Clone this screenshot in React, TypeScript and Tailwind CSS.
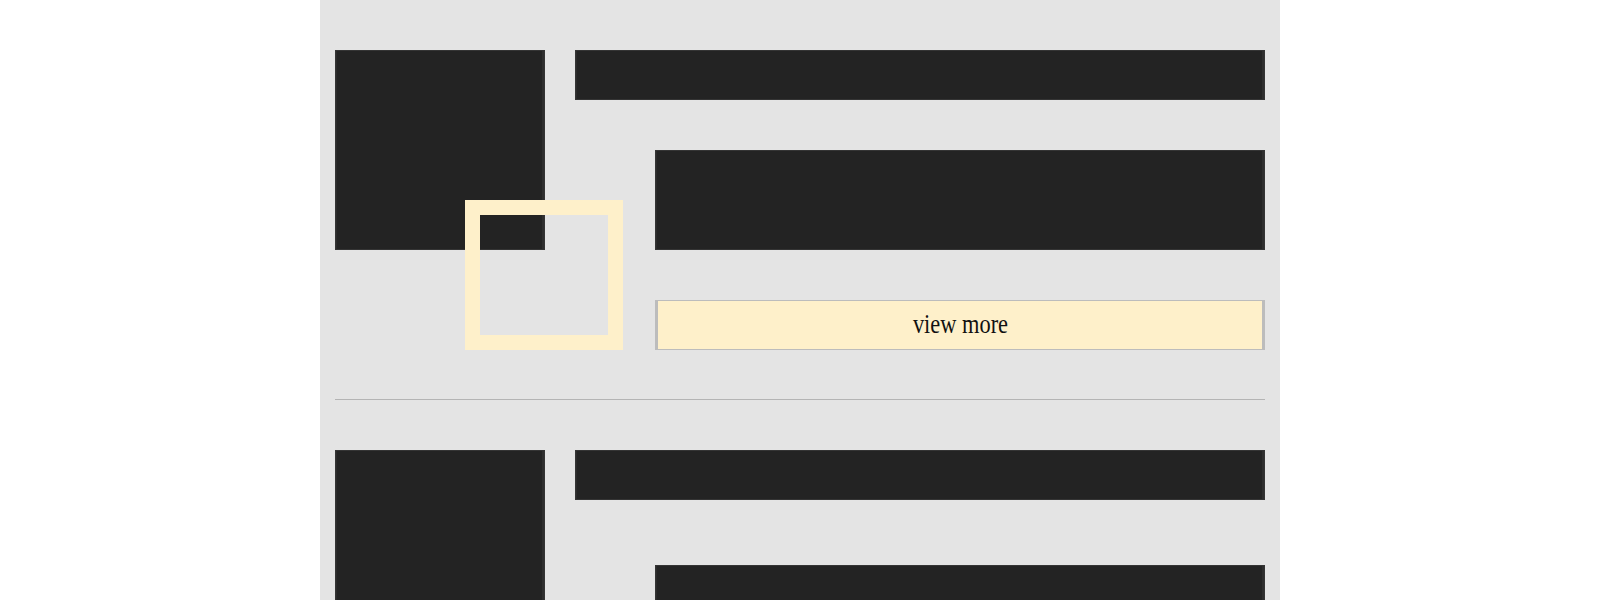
import React from "react";

function Block({ className }: { className?: string }) {
  return (
    <div
      className={
        "border border-[#343434] bg-[#232323] shadow-[inset_1px_0_0_#2b2b2b,inset_-2px_0_0_#2e2e2e] " +
        (className ?? "")
      }
    />
  );
}

function Item({ first, descGap }: { first?: boolean; descGap: string }) {
  return (
    <div className="relative flex gap-[30px]">
      <Block className="h-[200px] w-[210px] shrink-0" />
      <div className="flex flex-1 flex-col">
        <Block className="h-[50px]" />
        <Block className={"ml-[80px] h-[100px] " + descGap} />
        <button className="ml-[80px] mt-[50px] flex h-[50px] items-center justify-center border-x-[3px] border-y border-[#bcbcbc] bg-[#fef0ca] font-['Liberation_Serif',serif] text-[28px] leading-none text-[#111]">
          <span className="inline-block origin-center scale-x-[0.8] -translate-y-[1px]">view more</span>
        </button>
      </div>
      {first ? (
        <div className="absolute left-[130px] top-[150px] h-[150px] w-[158px] border-[15px] border-[#fef0ca]" />
      ) : null}
    </div>
  );
}

export default function App() {
  return (
    <div className="min-h-screen bg-white">
      <div className="mx-auto h-[600px] w-[960px] overflow-hidden bg-[#e4e4e4] px-[15px] pt-[50px]">
        <Item first descGap="mt-[50px]" />
        <hr className="mb-[50px] mt-[49px] border-0 border-t border-[#b4b4b4]" />
        <Item descGap="mt-[65px]" />
      </div>
    </div>
  );
}
